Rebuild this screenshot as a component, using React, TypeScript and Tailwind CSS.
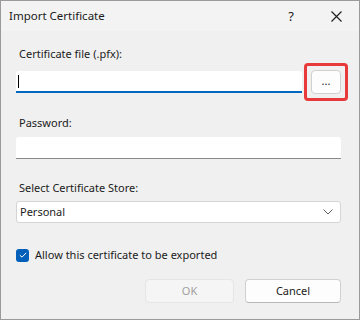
import React from "react";

const font = { fontFamily: '"Segoe UI", "Noto Sans", "Liberation Sans", sans-serif' };

function Label({ children, className = "" }: { children: React.ReactNode; className?: string }) {
  return <div className={`h-4 text-[11px] leading-4 text-[#1b1b1b] pl-[3px] ${className}`}>{children}</div>;
}

export default function App() {
  return (
    <div className="w-[360px] h-[320px] bg-[#f0f0f0] border border-[#9a9a9a] flex flex-col text-[#1b1b1b]" style={font}>
      {/* title bar */}
      <div className="h-[30px] bg-[#f3f3f3] flex items-center shrink-0">
        <span className="pl-[8px] text-[11.5px] leading-4">Import Certificate</span>
        <span className="ml-auto mr-[37px] text-[13px] leading-4">?</span>
        <svg width="11" height="11" viewBox="0 0 11 11" className="mr-[17px]">
          <path d="M0.5 0.5 L10.5 10.5 M10.5 0.5 L0.5 10.5" stroke="#1b1b1b" strokeWidth="1.1" />
        </svg>
      </div>

      <div className="flex flex-col pl-[15px] pr-[18px]">
        <Label className="mt-[15px]">Certificate file (.pfx):</Label>

        <div className="flex items-center mt-[8px] h-[24px]">
          <div className="flex-1 h-[22px] bg-white border-b-2 border-[#0067c0] rounded-t-[3px] flex items-center pl-[2px]">
            <div className="w-px h-[13px] bg-black" />
          </div>
          <div className="relative ml-[9px] w-[30px] h-[24px]">
            <div className="w-full h-full bg-[#fdfdfd] border border-[#d0d0d0] rounded-[4px] flex items-center justify-center text-[11px] leading-none pb-[3px]">
              ...
            </div>
            <div className="absolute -left-[7px] -top-[7px] w-[44px] h-[38px] border-[3px] border-[#e8393b] rounded-[4px]" />
          </div>
        </div>

        <Label className="mt-[21px]">Password:</Label>
        <div className="mt-[6px] h-[22px] bg-white border-b border-[#8a8a8a] rounded-t-[3px]" />

        <Label className="mt-[21px]">Select Certificate Store:</Label>
        <div className="mt-[5px] h-[22px] bg-white border border-[#d5d5d5] rounded-[3px] flex items-center pl-[3px] pr-[7px]">
          <span className="text-[11px] leading-4">Personal</span>
          <svg width="10" height="6" viewBox="0 0 10 6" className="ml-auto">
            <path d="M0.5 0.5 L5 5 L9.5 0.5" fill="none" stroke="#5f5f5f" strokeWidth="1" />
          </svg>
        </div>

        <div className="mt-[24px] flex items-center h-4">
          <div className="w-[13px] h-[13px] bg-[#005fb8] rounded-[3px] flex items-center justify-center">
            <svg width="8" height="6" viewBox="0 0 8 6">
              <path d="M0.8 3.2 L3 5.2 L7.2 0.8" fill="none" stroke="white" strokeWidth="1" />
            </svg>
          </div>
          <span className="ml-[6px] text-[11px] leading-4">Allow this certificate to be exported</span>
        </div>

        <div className="mt-[16px] flex justify-end gap-[11px]">
          <div className="w-[89px] h-[24px] bg-[#f5f5f5] border border-[#e5e5e5] rounded-[4px] flex items-center justify-center text-[11px] text-[#a0a0a0]">
            OK
          </div>
          <div className="w-[96px] h-[24px] bg-[#fdfdfd] border border-[#d0d0d0] border-b-[#b8b8b8] rounded-[4px] flex items-center justify-center text-[11px]">
            Cancel
          </div>
        </div>
      </div>
    </div>
  );
}
